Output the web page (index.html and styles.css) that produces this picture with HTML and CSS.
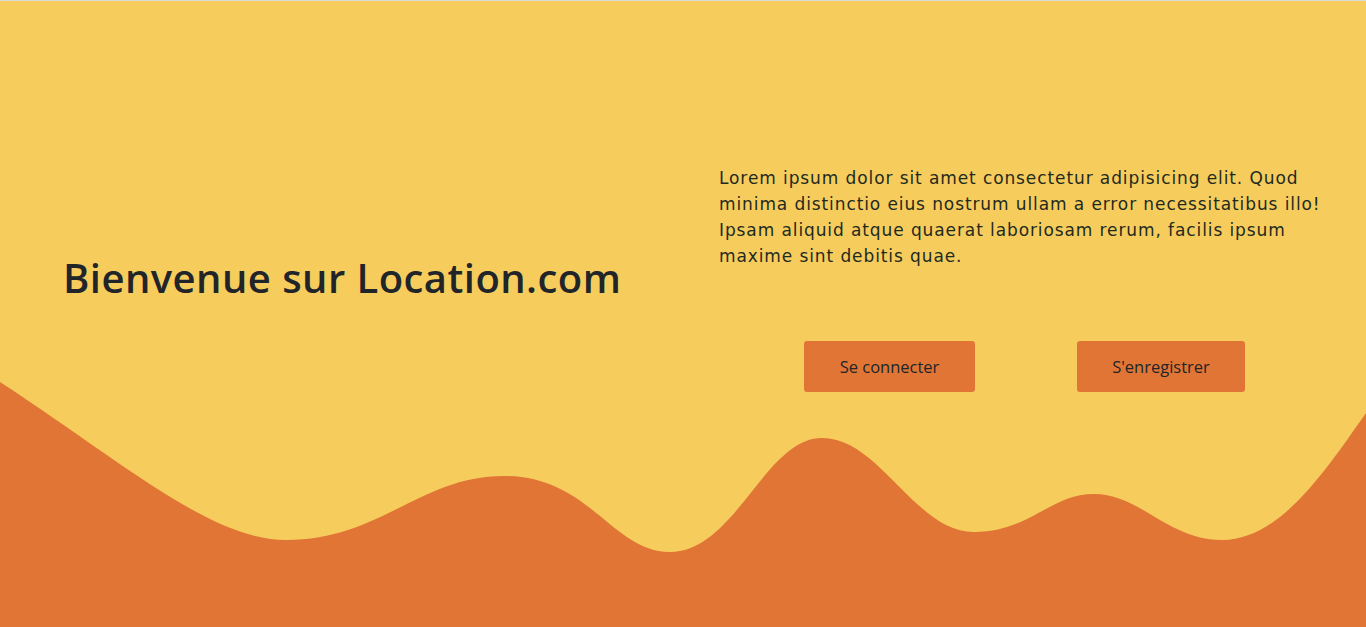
FILE: index.html
```html
<!DOCTYPE html>
<html lang="fr">
<head>
<meta charset="utf-8">
<title>Location.com</title>
<link rel="stylesheet" href="styles.css">
</head>
<body>
<main class="hero">
  <svg class="wave" viewBox="0 0 1366 626" preserveAspectRatio="none" aria-hidden="true">
    <path d="M0,381 C120,459 210,539 286,539 C380,539 420,475 504,475 C590,475 612,551 670,551 C735,551 765,437 822,437 C880,437 915,531 974,531 C1030,531 1050,493 1094,493 C1140,493 1168,539 1222,539 C1280,539 1325,470 1366,412 L1366,626 L0,626 Z" />
  </svg>
  <div class="content">
    <section class="intro">
      <h1 class="title">Bienvenue sur Location.com</h1>
    </section>
    <section class="side">
      <p class="lead">Lorem ipsum dolor sit amet consectetur adipisicing elit. Quod minima distinctio eius nostrum ullam a error necessitatibus illo! Ipsam aliquid atque quaerat laboriosam rerum, facilis ipsum maxime sint debitis quae.</p>
      <div class="actions">
        <a class="btn btn-login" href="#">Se connecter</a>
        <a class="btn btn-register" href="#">S'enregistrer</a>
      </div>
    </section>
  </div>
</main>
</body>
</html>
```
FILE: styles.css
```css
* { box-sizing: border-box; }
html, body { margin: 0; padding: 0; }
body {
  border-top: 1px solid #dcdcdc;
  background: #f6cd5d;
  font-family: "Open Sans", "Noto Sans", sans-serif;
  color: #212529;
  overflow: hidden;
}
.hero {
  position: relative;
  height: 626px;
  background: #f6cd5d;
}
.wave {
  position: absolute;
  left: 0;
  top: 0;
  width: 100%;
  height: 100%;
  display: block;
}
.wave path { fill: #e07535; }
.content {
  position: relative;
  height: 554px;
  display: grid;
  grid-template-columns: 683px 683px;
  align-items: center;
}
.intro { padding-left: 63px; }
.title {
  margin: 0;
  font-family: "Open Sans", sans-serif;
  font-weight: 600;
  font-size: 40px;
  letter-spacing: 0.45px;
  line-height: 1.2;
  color: #212529;
}
.side {
  padding-left: 36px;
  padding-top: 1px;
}
.lead {
  width: 612px;
  margin: 0 0 72px 0;
  font-family: "DejaVu Sans", sans-serif;
  font-size: 17px;
  letter-spacing: 0.9px;
  line-height: 26px;
  color: #1f2a1f;
}
.actions {
  display: flex;
  justify-content: center;
  gap: 102px;
  padding-right: 36px;
}
.btn {
  display: inline-block;
  height: 51px;
  line-height: 51px;
  text-align: center;
  background: #e07535;
  color: #212529;
  text-decoration: none;
  font-size: 16.5px;
  border-radius: 3px;
}
.btn-login { width: 171px; }
.btn-register { width: 168px; }
```
